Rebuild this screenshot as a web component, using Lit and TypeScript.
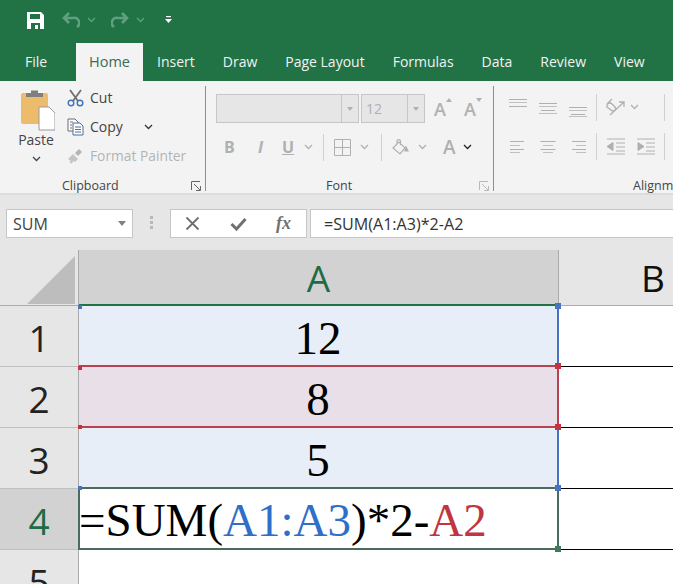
import { LitElement, html, css, svg } from "lit";
import { customElement } from "lit/decorators.js";

const chevron = (cls = "chev") => html`<svg class=${cls} width="9" height="6" viewBox="0 0 9 6"><path d="M1 1l3.5 3.5L8 1" fill="none" stroke="currentColor" stroke-width="1.3"/></svg>`;

// stacked horizontal lines of the alignment buttons: [y, width]
const lines = (rows: [number, number][], side: "left" | "center" | "right" = "center") => html`<svg width="20" height="20" viewBox="0 0 20 20">${rows.map(([y, w], i) => {
  const x = side === "left" ? 2 : side === "right" ? 18 - w : (20 - w) / 2;
  return svg`<path d="M${x} ${y + 0.5}h${w}" stroke="#b0b0b0" stroke-width="1" opacity=${i % 2 ? 0.75 : 1}/>`;
})}</svg>`;

const TABS = ["Insert", "Draw", "Page Layout", "Formulas", "Data", "Review", "View"];

@customElement("app-root")
export class AppRoot extends LitElement {
  static styles = css`
    :host {
      display: block;
      width: 673px;
      height: 584px;
      overflow: hidden;
      font-family: "Open Sans", "Noto Sans", sans-serif;
      background: #fff;
    }
    svg { display: block; flex: none; }

    .qat {
      height: 43px;
      background: #217346;
      display: flex;
      align-items: center;
      padding: 0 0 3px 27px;
      box-sizing: border-box;
      color: #5fa07f;
    }
    .qat .undo { margin-left: 18px; }
    .qat .chev { margin: 0 0 0 7px; color: #5fa07f; }
    .qat .redo { margin-left: 15px; }
    .qat .more { margin-left: 20px; }

    .tabs {
      height: 38px;
      background: #217346;
      display: flex;
      color: #f2f2f2;
      font-size: 14px;
      line-height: 38px;
    }
    .tab { padding: 0 14px; white-space: nowrap; }
    .tab.file { width: 76px; box-sizing: border-box; padding-left: 25px; }
    .tab.home {
      width: 67px;
      box-sizing: border-box;
      padding: 0;
      text-align: center;
      background: #f3f3f3;
      color: #3e6a54;
      font-size: 14.5px;
    }

    .ribbon {
      height: 114px;
      background: #f3f3f3;
      border-bottom: 2px solid #dcdcdc;
      box-sizing: border-box;
      display: flex;
      padding-top: 5px;
      overflow: hidden;
    }
    .group {
      flex: none;
      position: relative;
      height: 105px;
      box-sizing: border-box;
      border-right: 1px solid #8f8f8f;
      display: flex;
      flex-direction: column;
    }
    .group.clip { width: 206px; }
    .group.font { width: 288px; }
    .group.align { flex: 1; border: 0; }
    .label {
      position: absolute;
      bottom: -4px;
      font-size: 12.5px;
      line-height: 18px;
      color: #444;
      white-space: nowrap;
    }
    .launcher { position: absolute; right: 4px; bottom: 0; }

    .clip-body { display: flex; padding-left: 17px; }
    .paste {
      width: 38px;
      display: flex;
      flex-direction: column;
      align-items: center;
      font-size: 14px;
      color: #444;
      padding-top: 3px;
    }
    .paste span { line-height: 18px; }
    .paste .chev { margin-top: 7px; color: #444; }
    .small { margin: -3px 0 0 12px; display: flex; flex-direction: column; }
    .small div {
      height: 29px;
      display: flex;
      align-items: center;
      gap: 6px;
      font-size: 14px;
      color: #444;
      white-space: nowrap;
    }
    .small .off { color: #b4b4b4; font-size: 13.8px; }
    .small .chev { margin-left: 15px; color: #333; }

    .font-row1 { display: flex; align-items: center; padding: 8px 0 0 10px; height: 29px; }
    .combo {
      height: 29px;
      box-sizing: border-box;
      background: #e6e6e6;
      border: 1px solid #c6c6c6;
      display: flex;
      align-items: center;
      justify-content: flex-end;
      color: #b0b0b0;
      font-size: 14px;
    }
    .combo.name { width: 143px; }
    .combo.size { width: 64px; margin-left: 2px; justify-content: space-between; padding-left: 4px; }
    .combo i {
      width: 16px;
      height: 27px;
      border-left: 1px solid #c6c6c6;
      display: flex;
      align-items: center;
      justify-content: center;
    }
    .combo i::after {
      content: "";
      border: 3.5px solid transparent;
      border-top: 4px solid #b0b0b0;
      border-bottom: 0;
    }
    .grow {
      position: relative;
      font-size: 18px;
      line-height: 20px;
      color: #b0b0b0;
      width: 30px;
      text-align: center;
    }
    .grow b::after {
      content: "";
      position: absolute;
      top: -1px;
      right: 3px;
      border: 3.5px solid transparent;
      border-bottom: 4px solid #b0b0b0;
      border-top: 0;
    }
    .grow.down b::after { border-bottom: 0; border-top: 4px solid #b0b0b0; }
    .grow b { font-weight: 600; }

    .font-row2 {
      display: flex;
      align-items: center;
      height: 28px;
      margin-top: 10px;
      padding-left: 18px;
      color: #b0b0b0;
      font-size: 16px;
    }
    .bold { width: 34px; font-weight: 700; }
    .ital { width: 24px; font-weight: 700; font-style: italic; }
    .und { width: 17px; font-weight: 700; text-decoration: underline; }
    .font-row2 .chev { color: #b0b0b0; }
    .font-row2 .chev.dark { color: #222; }
    .sep { width: 1px; height: 27px; background: #d0d0d0; flex: none; }
    .sep.a { margin: 0 10px; }
    .chev-a { margin: 0 12px 0 9px; }
    .chev-b { margin-left: 9px; }
    .chev-u { margin-left: 5px; }
    .bucket { margin-left: 10px; }
    .color { font-size: 19px; font-weight: 600; margin-left: 16px; width: 20px; line-height: 24px; }

    .al-grid {
      display: grid;
      grid-template-columns: 30px 30px 30px 7px 30px 30px 8px;
      grid-template-rows: 38px 40px;
      padding: 2px 0 0 9px;
      align-items: center;
      justify-items: center;
    }
    .al-grid .orient {
      grid-column: span 2;
      justify-self: start;
      margin-left: 6px;
      display: flex;
      align-items: center;
      gap: 5px;
      color: #b0b0b0;
    }
    .al-grid .sep { height: 27px; }

    .bar {
      height: 55px;
      background: #e6e6e6;
      display: flex;
      padding: 14px 0 0 6px;
      box-sizing: border-box;
      align-items: flex-start;
    }
    .box {
      height: 29px;
      box-sizing: border-box;
      background: #fff;
      border: 1px solid #c6c6c6;
      font-size: 14px;
      color: #444;
      display: flex;
      align-items: center;
    }
    .namebox { width: 127px; padding: 0 6px; justify-content: space-between; font-size: 16px; }
    .namebox::after {
      content: "";
      border: 4px solid transparent;
      border-top: 5px solid #808080;
      border-bottom: 0;
    }
    .grip {
      margin: 7px 17px 0 17px;
      display: flex;
      flex-direction: column;
      gap: 2px;
    }
    .grip span { width: 3px; height: 3px; background: #b8b8b8; }
    .fnbox { width: 137px; justify-content: space-between; padding: 0 15px 0 14px; }
    .fx { font: italic 700 18px "Liberation Serif", serif; color: #707070; }
    .input { flex: 1; margin-left: 3px; padding-left: 13px; border-right: 0; font-size: 16.1px; color: #333; }

    .sheet {
      display: grid;
      grid-template-columns: 79px 480px 188px;
      grid-template-rows: 56px repeat(5, 61px);
    }
    .corner {
      background: #e6e6e6;
      border-right: 1px solid #ababab;
      border-bottom: 1px solid #ababab;
      box-sizing: border-box;
      display: flex;
      align-items: flex-end;
      justify-content: flex-end;
      padding: 0 3px 1px 0;
    }
    .col {
      display: flex;
      align-items: center;
      justify-content: center;
      font-size: 37px;
      line-height: 1;
      box-sizing: border-box;
      background: #e6e6e6;
      color: #111;
      border-bottom: 1px solid #ababab;
    }
    .col.on {
      background: #d2d2d2;
      color: #1f6b45;
      border-bottom: 2px solid #217346;
      border-right: 1px solid #ababab;
    }
    .rowh {
      display: flex;
      align-items: center;
      justify-content: center;
      font-size: 37px;
      line-height: 1;
      padding-top: 3px;
      background: #e6e6e6;
      color: #222;
      border-right: 1px solid #ababab;
      border-bottom: 1px solid #c0c0c0;
      box-sizing: border-box;
    }
    .rowh.on { background: #d2d2d2; color: #1f6b45; }
    .cell-v {
      position: relative;
      box-sizing: border-box;
      font: 47px "Liberation Serif", serif;
      color: #000;
      display: flex;
      align-items: center;
      justify-content: center;
      white-space: nowrap;
    }
    .blue { background: #e8eef8; border-right: 2px solid #4a72c4; padding-top: 4px; }
    .red { background: #e8dfe8; border-right: 2px solid #b8434f; border-bottom: 2px solid #b8434f; padding-top: 4px; }
    .a1 { border-bottom: 2px solid #b8434f; }
    .a3 { border-bottom: 2px solid #4b6b5c; }
    .a4 {
      justify-content: flex-start;
      border: 2px solid #4b6b5c;
      border-top: 0;
      margin-left: -1px;
      padding-top: 2px;
    }
    .a4 span { margin-left: -1px; }
    .a4 em { font-style: normal; color: #2f6fc9; }
    .a4 u { text-decoration: none; color: #c0353f; }
    .plain { border-bottom: 1px solid #000; }
    .h {
      position: absolute;
      width: 6px;
      height: 6px;
      z-index: 1;
    }
    .h.tr { top: -3px; right: -4px; }
    .h.br { bottom: -4px; right: -4px; }
    .h.tl { top: -1px; left: -1px; width: 4px; height: 4px; }
    .h.bl { bottom: -3px; left: -1px; width: 4px; height: 4px; }
    .b { background: #4a72c4; }
    .r { background: #c8323f; }
    .g { background: #3f7a5c; }
  `;

  private ribbon() {
    return html`<div class="ribbon">
      <div class="group clip">
        <div class="clip-body">
          <div class="paste">
            <svg width="38" height="42" viewBox="0 0 38 42">
              <rect x="4" y="4" width="27" height="31" rx="2" fill="#edbb6c"/>
              <path d="M9 4h5V1.5h7V4h5v4H9z" fill="#7f7f7f"/>
              <path d="M22 18h10l6 6v17H22z" fill="#fff" stroke="#9a9a9a"/>
            </svg>
            <span>Paste</span>
            ${chevron()}
          </div>
          <div class="small">
            <div>
              <svg width="17" height="18" viewBox="0 0 17 18">
                <path d="M3 1l8 11M14 1L6 12" stroke="#6f6f6f" stroke-width="1.8" fill="none"/>
                <circle cx="4" cy="14" r="2.8" fill="none" stroke="#3d72b8" stroke-width="1.4"/>
                <circle cx="13" cy="14" r="2.8" fill="none" stroke="#3d72b8" stroke-width="1.4"/>
              </svg>
              Cut
            </div>
            <div>
              <svg width="17" height="18" viewBox="0 0 17 18" fill="#fff" stroke="#6a6a6a">
                <path d="M1 1h7l3 3v9H1z"/>
                <path d="M6 5h7l3 3v9H6z" stroke="#4a6f9a"/>
                <path d="M3 4h3M3 7h2M3 10h2" />
                <path d="M8 9h6M8 11.5h6M8 14h6" stroke="#4a6f9a"/>
              </svg>
              Copy ${chevron()}
            </div>
            <div class="off">
              <svg width="17" height="18" viewBox="0 0 17 18">
                <path d="M1 12l5-5 5 5-3 3-1.500-1-2 2.500-2-1 1-2-1-.5z" fill="#c4c4c4"/>
                <path d="M8 6l4-4 3 3-4 4z" fill="#b4b4b4"/>
              </svg>
              Format Painter
            </div>
          </div>
        </div>
        <span class="label" style="left:62px">Clipboard</span>
        <svg class="launcher" width="10" height="10" viewBox="0 0 10 10" fill="none" stroke="#666"><path d="M.5 9V.5H9M3 3l6 6M5 9.500h4.500V5"/></svg>
      </div>

      <div class="group font">
        <div class="font-row1">
          <div class="combo name"><i></i></div>
          <div class="combo size">12<i></i></div>
          <div class="grow up"><b>A</b></div>
          <div class="grow down"><b>A</b></div>
        </div>
        <div class="font-row2">
          <span class="bold">B</span><span class="ital">I</span><span class="und">U</span>
          <span class="chev-u">${chevron()}</span>
          <span class="sep a"></span>
          <svg width="17" height="17" viewBox="0 0 17 17" fill="none" stroke="#b0b0b0"><path d="M.5.500h16v16H.5zM8.500.500v16M.5 8.500h16"/></svg>
          <span class="chev-a">${chevron()}</span>
          <span class="sep"></span>
          <svg class="bucket" width="17" height="18" viewBox="0 0 17 18" fill="none" stroke="#b0b0b0" stroke-width="1.200"><path d="M1 10l6-6 6 6-5 6zM5 6V3a1.800 1.800 0 0 1 3.500 0v4"/><path d="M14 9l2 4h-3z" fill="#b0b0b0"/></svg>
          <span class="chev-b">${chevron()}</span>
          <span class="color">A</span>
          ${chevron("chev dark")}
        </div>
        <span class="label" style="left:120px">Font</span>
        <svg class="launcher" width="10" height="10" viewBox="0 0 10 10" fill="none" stroke="#b8b8b8"><path d="M.5 9V.5H9M3 3l6 6M5 9.500h4.500V5"/></svg>
      </div>

      <div class="group align">
        <div class="al-grid">
          ${lines([[2, 18], [5, 18], [9, 18]])}
          ${lines([[6, 18], [9, 18], [13, 14], [16, 18]])}
          ${lines([[10, 18], [13, 18], [17, 14], [19, 18]])}
          <span class="sep"></span>
          <div class="orient">
            <svg width="19" height="18" viewBox="0 0 19 18" fill="none" stroke="#b0b0b0" stroke-width="1.300"><path d="M1 6l5-5M1 9a3 3 0 0 1 5-3l3 3a2.500 2.500 0 0 1-4 3zM4 17L18 4M13 4h5v5"/></svg>
            ${chevron()}
          </div>
          <span class="sep"></span>

          ${lines([[5, 14], [9, 10], [13, 14], [16, 10]], "left")}
          ${lines([[5, 15], [9, 10], [13, 15], [16, 10]])}
          ${lines([[5, 14], [9, 10], [13, 14], [16, 10]], "right")}
          <span class="sep"></span>
          <svg width="19" height="17" viewBox="0 0 19 17" fill="none" stroke="#b0b0b0"><path d="M1 1h18M10 5h9M10 9h9M10 13h9M1 16h18"/><path d="M1 8.500l6-4v8z" fill="#b0b0b0"/></svg>
          <svg width="19" height="17" viewBox="0 0 19 17" fill="none" stroke="#b0b0b0"><path d="M1 1h18M10 5h9M10 9h9M10 13h9M1 16h18"/><path d="M8 8.500l-6-4v8z" fill="#b0b0b0"/></svg>
          <span class="sep"></span>
        </div>
        <span class="label" style="left:139px">Alignment</span>
      </div>
    </div>`;
  }

  private handle(pos: string, color: string) {
    return html`<span class="h ${pos} ${color}"></span>`;
  }

  render() {
    return html`
      <div class="qat">
        <svg width="17" height="17" viewBox="0 0 17 17">
          <path d="M0 0h14l3 3v14H0z" fill="#fff"/>
          <path d="M3 2h10v5H3z" fill="#217346"/>
          <path d="M4 11h9v6h-2v-4H8v4H4z" fill="#217346"/>
        </svg>
        <svg class="undo" width="18" height="17" viewBox="0 0 18 17" fill="none" stroke="currentColor" stroke-width="2.600"><path d="M7 1L2 6l5 5M2 6h9a5 5 0 0 1 4 9"/></svg>
        ${chevron()}
        <svg class="redo" width="18" height="17" viewBox="0 0 18 17" fill="none" stroke="currentColor" stroke-width="2.600"><path d="M11 1l5 5-5 5M16 6H7a5 5 0 0 0-4 9"/></svg>
        ${chevron()}
        <svg class="more" width="7" height="8" viewBox="0 0 7 8"><path d="M1 0h5v1.200H1z" fill="#fff"/><path d="M0 3h7L3.500 7z" fill="#fff"/></svg>
      </div>

      <div class="tabs">
        <div class="tab file">File</div>
        <div class="tab home">Home</div>
        ${TABS.map((t) => html`<div class="tab">${t}</div>`)}
      </div>

      ${this.ribbon()}

      <div class="bar">
        <div class="box namebox">SUM</div>
        <div class="grip"><span></span><span></span><span></span></div>
        <div class="box fnbox">
          <svg width="15" height="15" viewBox="0 0 15 15"><path d="M1.500 1.500l12 12M13.500 1.500l-12 12" stroke="#707070" stroke-width="1.800"/></svg>
          <svg width="17" height="14" viewBox="0 0 17 14"><path d="M1.500 7l5 5L15.500 2" fill="none" stroke="#707070" stroke-width="3"/></svg>
          <span class="fx">fx</span>
        </div>
        <div class="box input">=SUM(A1:A3)*2-A2</div>
      </div>

      <div class="sheet">
        <div class="corner">
          <svg width="48" height="48" viewBox="0 0 48 48"><path d="M48 0v48H0z" fill="#bdbdbd"/></svg>
        </div>
        <div class="col on">A</div>
        <div class="col">B</div>

        <div class="rowh">1</div>
        <div class="cell-v blue a1">12
          ${this.handle("tl", "b")}${this.handle("tr", "b")}${this.handle("br", "r")}
        </div>
        <div class="plain"></div>

        <div class="rowh">2</div>
        <div class="cell-v red">8${this.handle("tl", "r")}${this.handle("bl", "r")}${this.handle("br", "r")}</div>
        <div class="plain"></div>

        <div class="rowh">3</div>
        <div class="cell-v blue a3">5${this.handle("bl", "b")}${this.handle("br", "b")}</div>
        <div class="plain"></div>

        <div class="rowh on">4</div>
        <div class="cell-v a4"><span>=SUM(<em>A1:A3</em>)*2-<u>A2</u></span>${this.handle("br", "g")}</div>
        <div class="plain"></div>

        <div class="rowh">5</div>
        <div class="cell-v"></div>
        <div></div>
      </div>
    `;
  }
}
